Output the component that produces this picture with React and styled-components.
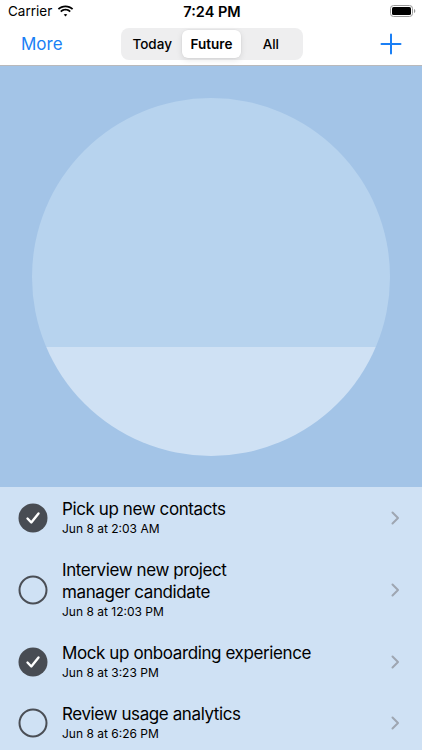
import React from 'react';
import styled, { createGlobalStyle } from 'styled-components';

const tasks = [
    { title: 'Pick up new contacts', date: 'Jun 8 at 2:03 AM', done: true },
    { title: 'Interview new project\nmanager candidate', date: 'Jun 8 at 12:03 PM', done: false },
    { title: 'Mock up onboarding experience', date: 'Jun 8 at 3:23 PM', done: true },
    { title: 'Review usage analytics', date: 'Jun 8 at 6:26 PM', done: false },
];

const segments = ['Today', 'Future', 'All'];

function CheckCircle({ done }) {
    if (done) {
        return (
            <svg width="30" height="30" viewBox="0 0 30 30">
                <circle cx="15" cy="15" r="14.5" fill="#484c53" />
                <path d="M9.5 15.5 L13.3 19.5 L20.5 10.5" fill="none" stroke="#fff" strokeWidth="2.4" strokeLinecap="round" strokeLinejoin="round" />
            </svg>
        );
    }
    return (
        <svg width="30" height="30" viewBox="0 0 30 30">
            <circle cx="15" cy="15" r="13.5" fill="none" stroke="#4a4e55" strokeWidth="2" />
        </svg>
    );
}

function App() {
    return (
        <Screen>
            <GlobalStyle />
            <StatusBar>
                <Carrier>
                    Carrier
                    <svg width="17" height="12" viewBox="0 0 17 12">
                        <path d="M8.5 2.2c2.5 0 4.8 1 6.5 2.6l1.2-1.3C14.2 1.6 11.5.4 8.5.4S2.8 1.6.8 3.5L2 4.8c1.7-1.6 4-2.6 6.5-2.6z" fill="#000" />
                        <path d="M8.5 5.6c1.6 0 3 .6 4.1 1.6l1.2-1.3c-1.4-1.3-3.3-2.1-5.3-2.1s-3.9.8-5.3 2.1l1.2 1.3c1.1-1 2.5-1.6 4.1-1.6z" fill="#000" />
                        <path d="M8.5 8.9c.7 0 1.3.3 1.8.7L8.5 11.5 6.7 9.6c.5-.4 1.1-.7 1.8-.7z" fill="#000" />
                    </svg>
                </Carrier>
                <Clock>7:24 PM</Clock>
                <Battery>
                    <svg width="26" height="12" viewBox="0 0 26 12">
                        <rect x="0.5" y="0.5" width="22" height="11" rx="3" fill="none" stroke="#999" />
                        <rect x="2" y="2" width="19" height="8" rx="1.6" fill="#000" />
                        <path d="M24 4v4c.8-.3 1.3-1.1 1.3-2s-.5-1.7-1.3-2z" fill="#999" />
                    </svg>
                </Battery>
            </StatusBar>
            <NavBar>
                <NavButton>More</NavButton>
                <Segmented>
                    {segments.map((s) => (
                        <Segment key={s} active={s === 'Future'}>{s}</Segment>
                    ))}
                </Segmented>
                <AddButton>
                    <svg width="22" height="22" viewBox="0 0 22 22">
                        <path d="M11 1.5v19M1.5 11h19" stroke="#1a7ff5" strokeWidth="2" strokeLinecap="round" />
                    </svg>
                </AddButton>
            </NavBar>
            <Hero>
                <Orb />
            </Hero>
            <TaskList>
                {tasks.map((t) => (
                    <TaskRow key={t.title}>
                        <CheckCircle done={t.done} />
                        <TaskText>
                            <TaskTitle>{t.title}</TaskTitle>
                            <TaskDate>{t.date}</TaskDate>
                        </TaskText>
                        <Chevron>
                            <svg width="9" height="14" viewBox="0 0 9 14">
                                <path d="M1.5 1.5 L7 7 L1.5 12.5" fill="none" stroke="#9ea6b1" strokeWidth="2" strokeLinecap="round" strokeLinejoin="round" />
                            </svg>
                        </Chevron>
                    </TaskRow>
                ))}
            </TaskList>
        </Screen>
    );
}

export default App;

const GlobalStyle = createGlobalStyle`
    html, body {
        margin: 0;
        padding: 0;
        background: #fff;
    }
    body {
        font-family: Inter, "Noto Sans", sans-serif;
        -webkit-font-smoothing: antialiased;
    }
`;

const Screen = styled.div`
    width: 422px;
    height: 750px;
    overflow: hidden;
    display: flex;
    flex-direction: column;
    background: #cfe1f4;
`;

const StatusBar = styled.div`
    flex-shrink: 0;
    height: 22px;
    background: #fff;
    display: grid;
    grid-template-columns: 1fr auto 1fr;
    align-items: center;
    padding: 0 6px 0 8px;
`;

const Carrier = styled.div`
    display: flex;
    align-items: center;
    gap: 5px;
    font-size: 13.5px;
    color: #000;
`;

const Clock = styled.div`
    font-size: 14.5px;
    font-weight: 600;
    color: #000;
`;

const Battery = styled.div`
    justify-self: end;
    display: flex;
    align-items: center;
`;

const NavBar = styled.div`
    flex-shrink: 0;
    height: 43px;
    background: #fff;
    border-bottom: 1px solid #b9b9bb;
    display: flex;
    align-items: center;
    justify-content: space-between;
    padding: 0 20px 0 21px;
`;

const NavButton = styled.div`
    font-size: 17px;
    color: #1a7ff5;
    width: 62px;
`;

const AddButton = styled.div`
    width: 62px;
    display: flex;
    justify-content: flex-end;
`;

const Segmented = styled.div`
    display: flex;
    padding: 2px;
    background: #eeeeef;
    border-radius: 8px;
    width: 182px;
    box-sizing: border-box;
`;

const Segment = styled.div`
    flex: 1;
    height: 28px;
    display: flex;
    align-items: center;
    justify-content: center;
    font-size: 13.5px;
    font-weight: ${(p) => (p.active ? 600 : 500)};
    color: #000;
    border-radius: 6px;
    background: ${(p) => (p.active ? '#fff' : 'transparent')};
    box-shadow: ${(p) => (p.active ? '0 2px 6px rgba(0,0,0,0.1), 0 0 0 0.5px rgba(0,0,0,0.04)' : 'none')};
`;

const Hero = styled.div`
    flex-shrink: 0;
    height: 421px;
    background: #a3c4e7;
    display: flex;
    align-items: center;
    justify-content: center;
`;

const Orb = styled.div`
    width: 358px;
    height: 358px;
    border-radius: 50%;
    background: linear-gradient(to bottom, #b7d3ee 0%, #b7d3ee 69.6%, #cfe1f4 69.6%, #cfe1f4 100%);
`;

const TaskList = styled.div`
    flex: 1;
    background: #cfe1f4;
`;

const TaskRow = styled.div`
    display: flex;
    align-items: center;
    padding: 11px 22px 11px 18px;
    gap: 14px;
`;

const TaskText = styled.div`
    flex: 1;
    min-width: 0;
`;

const TaskTitle = styled.div`
    font-size: 17px;
    line-height: 22px;
    letter-spacing: -0.4px;
    white-space: pre-line;
    color: #000;
`;

const TaskDate = styled.div`
    font-size: 12px;
    line-height: 16px;
    margin-top: 1px;
    color: #000;
`;

const Chevron = styled.div`
    display: flex;
    align-items: center;
`;
